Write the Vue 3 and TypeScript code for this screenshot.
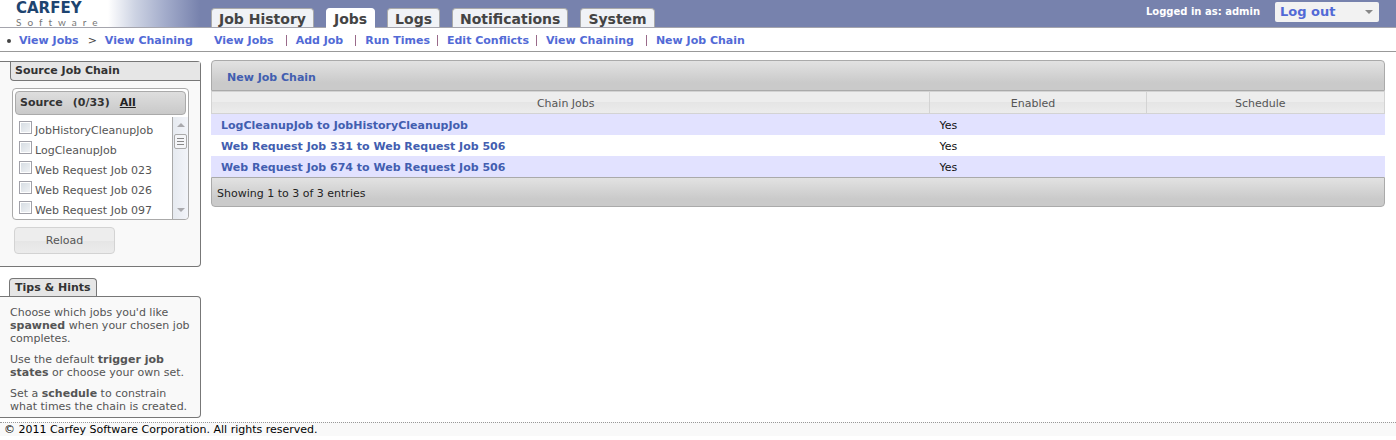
<script setup lang="ts">
import { ref } from 'vue'

interface SubLink { label: string; wide: boolean }
interface Source { name: string; picked: boolean }

const tabs: string[] = ['Job History', 'Jobs', 'Logs', 'Notifications', 'System']
const activeTab = ref('Jobs')
const account = ref('Log out')

const subLinks: SubLink[] = [
  { label: 'View Jobs', wide: true },
  { label: 'Add Job', wide: true },
  { label: 'Run Times', wide: false },
  { label: 'Edit Conflicts', wide: false },
  { label: 'View Chaining', wide: true },
  { label: 'New Job Chain', wide: false },
]

const sources = ref<Source[]>([
  { name: 'JobHistoryCleanupJob', picked: false },
  { name: 'LogCleanupJob', picked: false },
  { name: 'Web Request Job 023', picked: false },
  { name: 'Web Request Job 026', picked: false },
  { name: 'Web Request Job 097', picked: false },
])

const chains: string[] = [
  'LogCleanupJob to JobHistoryCleanupJob',
  'Web Request Job 331 to Web Request Job 506',
  'Web Request Job 674 to Web Request Job 506',
]
</script>

<template>
  <div class="page">
    <header class="banner">
      <a class="logo" href="#">
        <span class="logo-name">CARFEY</span>
        <span class="logo-sub">Software</span>
      </a>
      <nav class="tabs" aria-label="Main">
        <a
          v-for="tab in tabs"
          :key="tab"
          href="#"
          class="tab"
          :class="{ active: tab === activeTab }"
          @click.prevent="activeTab = tab"
        >{{ tab }}</a>
      </nav>
      <div class="account">
        <label for="account">Logged in as: admin</label>
        <div class="drop">
          <select id="account" v-model="account">
            <option>Log out</option>
          </select>
          <svg class="caret" width="8" height="4" viewBox="0 0 8 4" aria-hidden="true"><path d="M0 0H8L4 4Z" fill="#888" /></svg>
        </div>
      </div>
    </header>

    <div class="subbar">
      <nav class="crumbs" aria-label="Breadcrumb">
        <span class="bullet"></span>
        <a href="#">View Jobs</a>
        <span class="arrow">&gt;</span>
        <a href="#">View Chaining</a>
      </nav>
      <nav class="sublinks" aria-label="Jobs">
        <a v-for="link in subLinks" :key="link.label" href="#" :class="{ wide: link.wide }">{{ link.label }}</a>
      </nav>
    </div>

    <div class="columns">
      <aside class="side">
        <section class="panel source">
          <h2 class="panel-title">Source Job Chain</h2>
          <div class="picker">
            <div class="picker-head">
              <span>Source</span><span>(0/33)</span><a href="#">All</a>
            </div>
            <div class="picker-body">
              <ul>
                <li v-for="(s, i) in sources" :key="s.name">
                  <input :id="'source-' + i" v-model="s.picked" type="checkbox" />
                  <label :for="'source-' + i">{{ s.name }}</label>
                </li>
              </ul>
              <div class="track" aria-hidden="true">
                <svg width="10" height="5" viewBox="0 0 10 5"><path d="M1 5L5 1L9 5Z" fill="#a9a9ad" /></svg>
                <span class="thumb"><i></i><i></i><i></i></span>
                <svg class="down" width="10" height="5" viewBox="0 0 10 5"><path d="M1 0L5 4L9 0Z" fill="#a9a9ad" /></svg>
              </div>
            </div>
          </div>
          <button type="button" class="reload">Reload</button>
        </section>

        <section class="tips">
          <h2 class="tips-title">Tips &amp; Hints</h2>
          <div class="panel tips-body">
            <p>Choose which jobs you'd like <b>spawned</b> when your chosen job completes.</p>
            <p>Use the default <b>trigger job states</b> or choose your own set.</p>
            <p>Set a <b>schedule</b> to constrain what times the chain is created.</p>
          </div>
        </section>
      </aside>

      <main class="main">
        <div class="bar top"><a href="#">New Job Chain</a></div>
        <table>
          <colgroup><col class="c-jobs" /><col class="c-enabled" /><col /></colgroup>
          <thead>
            <tr><th scope="col">Chain Jobs</th><th scope="col">Enabled</th><th scope="col">Schedule</th></tr>
          </thead>
          <tbody>
            <tr v-for="chain in chains" :key="chain">
              <td><a href="#">{{ chain }}</a></td>
              <td>Yes</td>
              <td></td>
            </tr>
          </tbody>
        </table>
        <div class="bar bottom">Showing 1 to 3 of 3 entries</div>
      </main>
    </div>

    <footer class="foot">© 2011 Carfey Software Corporation. All rights reserved.</footer>
  </div>
</template>

<style>
body {
  margin: 0;
  background: #fff;
}
</style>

<style scoped>
.page {
  font: 11px/13px Verdana, "DejaVu Sans", sans-serif;
  color: #111;
}
.page * {
  box-sizing: border-box;
}
a {
  color: #526ad6;
  font-weight: bold;
  text-decoration: none;
}
.banner {
  display: flex;
  height: 28px;
  border-bottom: 1px solid #a5a5ad;
  background: linear-gradient(90deg, #fff 108px, #cdd3e3 135px, #a3accb 165px, #7782ad 200px);
}
.logo {
  display: flex;
  flex-direction: column;
  flex: 0 0 211px;
  padding-left: 16px;
}
.logo-name {
  font: bold 15px/17px "DejaVu Sans", sans-serif;
  color: #1d4470;
}
.logo-sub {
  font: 10px/10px "Lato", sans-serif;
  letter-spacing: 6px;
  color: #777;
}
.tabs {
  display: flex;
  align-items: flex-end;
  gap: 12px;
}
.tab {
  height: 19px;
  padding: 0 7px;
  border: 1px solid #aaa;
  border-bottom: 0;
  border-radius: 4px 4px 0 0;
  background: #f0f2f6;
  color: #444;
  font-size: 14px;
  line-height: 20px;
  white-space: nowrap;
}
.tab.active {
  height: 20px;
  margin-bottom: -1px;
  border-color: #fff;
  background: #fff;
}
.account {
  display: flex;
  align-items: flex-start;
  gap: 15px;
  margin-left: auto;
  padding: 2px 17px 0 0;
  color: #fff;
  font-size: 10px;
  font-weight: bold;
  line-height: 20px;
}
.drop {
  position: relative;
}
.drop select {
  display: block;
  width: 104px;
  height: 20px;
  padding: 0 5px;
  border: 0;
  border-radius: 2px;
  background: #f2f2f2;
  color: #526ad6;
  font: bold 13px/20px Verdana, "DejaVu Sans", sans-serif;
  appearance: none;
}
.caret {
  position: absolute;
  right: 6px;
  top: 8px;
}
.subbar {
  display: flex;
  height: 24px;
  padding-top: 2px;
  border-bottom: 1px solid #999;
  line-height: 21px;
  white-space: nowrap;
}
.crumbs {
  display: flex;
  align-items: center;
  flex: 0 0 214px;
  padding-left: 7px;
}
.bullet {
  width: 4px;
  height: 4px;
  margin-right: 8px;
  border-radius: 50%;
  background: #444;
}
.arrow {
  margin: 0 8px 0 9px;
  color: #444;
}
.sublinks {
  display: flex;
  align-items: center;
}
.sublinks a {
  display: flex;
  align-items: center;
}
.sublinks a:not(:last-child)::after {
  content: "";
  width: 1px;
  height: 11px;
  margin: 0 9px 0 7px;
  background: #9a6a8a;
}
.sublinks a.wide:not(:last-child)::after {
  margin-left: 12px;
}
.columns {
  display: flex;
  align-items: flex-start;
  gap: 10px;
  padding-right: 11px;
}
.side {
  flex: 0 0 201px;
  padding-top: 9px;
}
.panel {
  border: 1px solid #777;
  border-left: 0;
  border-radius: 0 4px 4px 0;
  background: #f9f9f9;
}
.source {
  padding-bottom: 12px;
}
h2 {
  margin: 0;
  font-size: 11px;
  line-height: 18px;
  color: #333;
}
.panel-title {
  margin-left: 10px;
  padding-left: 4px;
  border: solid #777;
  border-width: 0 0 1px 1px;
  border-bottom-left-radius: 4px;
  background: #e6e6e6;
}
.picker {
  margin: 7px 11px 0 12px;
  border: 1px solid #aaa;
  border-radius: 4px;
  background: #fff;
}
.picker-head {
  display: flex;
  gap: 10px;
  margin: 2px;
  padding-left: 4px;
  border: 1px solid #aaa;
  border-radius: 4px;
  background: linear-gradient(#dedede, #c9c9c9);
  color: #333;
  font-weight: bold;
  line-height: 22px;
}
.picker-head a {
  color: #222;
  text-decoration: underline;
}
.picker-body {
  display: flex;
  justify-content: space-between;
}
ul {
  margin: 0;
  padding: 2px 0 0 6px;
  list-style: none;
}
li {
  display: flex;
  align-items: flex-start;
  gap: 3px;
  height: 20px;
  color: #555;
  line-height: 24px;
  white-space: nowrap;
}
li input {
  width: 13px;
  height: 13px;
  margin: 2px 0 0;
  border: 1px solid #a0a0a8;
  background: linear-gradient(135deg, #d4dbe2, #f2f4f6);
  box-shadow: inset 0 0 0 1px #fff;
  appearance: none;
}
li input:checked {
  background: #526ad6;
}
.track {
  display: flex;
  flex-direction: column;
  align-items: center;
  width: 16px;
  padding: 5px 0 6px;
  border-left: 1px solid #aaa;
  border-bottom-right-radius: 4px;
  background: linear-gradient(90deg, #e6eaf0, #f2f4f9);
}
.thumb {
  display: flex;
  flex-direction: column;
  align-items: center;
  gap: 2px;
  width: 13px;
  height: 15px;
  margin-top: 7px;
  padding-top: 3px;
  border: 1px solid #aaa;
  border-radius: 2px;
  background: #f4f5f8;
}
.thumb i {
  width: 7px;
  height: 1px;
  background: #888;
}
.down {
  margin-top: auto;
}
.reload {
  display: block;
  width: 101px;
  height: 27px;
  margin: 7px 0 0 14px;
  padding: 0;
  border: 1px solid #d3d3d3;
  border-radius: 4px;
  background: linear-gradient(#ededed 50%, #e5e5e5 50%, #ececec);
  color: #555;
  font: 11px/24px Verdana, "DejaVu Sans", sans-serif;
}
.tips {
  margin-top: 11px;
}
.tips-title {
  width: fit-content;
  margin-left: 9px;
  padding: 0 5px;
  border: 1px solid #777;
  border-bottom: 0;
  border-radius: 4px 4px 0 0;
  background: #e6e6e6;
  line-height: 17px;
}
.tips-body {
  padding: 9px 5px 4px 10px;
  color: #555;
}
p {
  margin: 0 0 8px;
}
p:last-child {
  margin-bottom: 0;
}
.main {
  flex: 1;
  min-width: 0;
  padding-top: 8px;
}
.main a {
  color: #425eb0;
}
.bar {
  border: 1px solid #aaa;
  background: linear-gradient(#e2e2e2, #cacaca 75%);
}
.top {
  padding: 5px 15px 0;
  border-radius: 4px 4px 0 0;
  line-height: 24px;
}
.bottom {
  padding: 4px 5px 0;
  border-radius: 0 0 4px 4px;
  color: #222;
  line-height: 24px;
}
table {
  width: 100%;
  border-collapse: separate;
  border-spacing: 0;
  table-layout: fixed;
}
.c-jobs {
  width: 61.2%;
}
.c-enabled {
  width: 18.4%;
}
th {
  height: 23px;
  padding: 1px 10px 0 0;
  border: solid #d3d3d3;
  border-width: 1px 0 1px 1px;
  background: linear-gradient(#ededed 50%, #e5e5e5 50%, #ececec);
  color: #555;
  font-weight: normal;
}
th:last-child {
  border-right-width: 1px;
}
td {
  height: 21px;
  padding: 2px 10px 0;
}
tbody tr:nth-child(odd) {
  background: #e2e2ff;
}
.foot {
  margin-top: 4px;
  padding-left: 4px;
  border-top: 1px dotted #999;
  background: #f9f9f9;
  color: #000;
}
</style>
